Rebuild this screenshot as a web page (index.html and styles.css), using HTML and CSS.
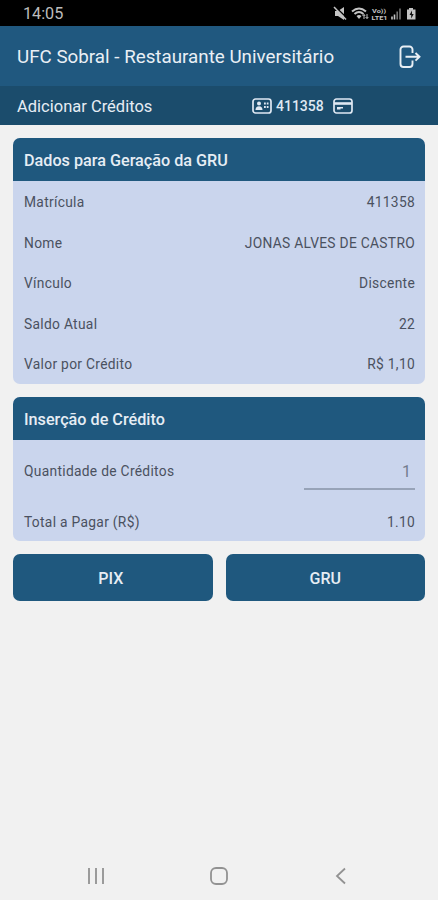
FILE: index.html
```html
<!DOCTYPE html>
<html lang="pt-BR">
<head>
  <meta charset="UTF-8">
  <meta name="viewport" content="width=device-width, initial-scale=1.0">
  <title>UFC Sobral - Restaurante Universitário</title>
  <link rel="stylesheet" href="styles.css">
</head>
<body>
  <div class="app">
    <div class="status-bar">
      <span class="clock">14:05</span>
      <svg class="status-icons" width="86" height="16" viewBox="0 0 86 16" fill="none" stroke="#c4c4c4">
        <!-- mudo -->
        <path d="M2 5h3l6-4v13l-6-4H2z" fill="#c4c4c4" stroke="none"/>
        <path d="M2.500 1l12 11.500" stroke="#000" stroke-width="1.500"/>
        <path d="M1 1l12 12.500" stroke-width="1.500"/>
        <!-- wifi -->
        <path d="M19 5.500q7-6 14 0M21.500 8q4.500-4 9 0" stroke-width="2"/>
        <path d="M23.500 10l2.500 3 2.500-3q-2.500-2-5 0z" fill="#c4c4c4" stroke="none"/>
        <path d="M31 13V8.500m-1.500 1.500L31 8.500l1.200 1.500M34 8v4.500m-1.500-1.500L34 12.500l1.300-1.500"/>
        <!-- VoLTE -->
        <text class="lte" x="39" y="6.500" textLength="14" lengthAdjust="spacingAndGlyphs">Vo))</text>
        <text class="lte" x="38.500" y="14" textLength="16" lengthAdjust="spacingAndGlyphs">LTE1</text>
        <!-- sinal -->
        <path d="M59 13.500v-3M61.500 13.500V8.500" stroke-width="1.600"/>
        <path d="M64.200 13.500V5.500M67 13.500V2.500" stroke="#747474" stroke-width="1.600"/>
        <!-- bateria -->
        <path d="M74 3.500h2V2h4v1.500h2.500v10H74z" fill="#c4c4c4" stroke="none"/>
        <path d="M79 4.500L76.500 9h1.700v3.500L80.700 8H79z" fill="#111" stroke="none"/>
      </svg>
    </div>

    <header class="header">
      <h1>UFC Sobral - Restaurante Universitário</h1>
      <svg class="logout" width="22" height="24" viewBox="0 0 22 24" fill="none" stroke="#e9eff5" stroke-width="1.900">
        <path d="M13.500 8V4.500a3 3 0 0 0-3-3h-6a3 3 0 0 0-3 3v14.500a3 3 0 0 0 3 3h6a3 3 0 0 0 3-3v-3.500"/>
        <path d="M6.500 11.800h13.500M16.500 8l4 3.800-4 3.800"/>
      </svg>
    </header>

    <div class="subheader">
      <h2>Adicionar Créditos</h2>
      <div class="user">
        <svg width="20" height="16" viewBox="0 0 20 16" fill="none" stroke="#dfe8f3" stroke-width="1.700">
          <rect x="1" y="1" width="18" height="14" rx="2.500"/>
          <circle cx="7" cy="5.500" r="2" fill="#dfe8f3" stroke="none"/>
          <path d="M3.500 12q0-3.800 3.500-3.800t3.500 3.800z" fill="#dfe8f3" stroke="none"/>
          <path d="M12 5.500h1.800m1 0h1.700M12 9h1.800m1 0h1.700" stroke-width="2.200"/>
        </svg>
        <span>411358</span>
        <svg width="20" height="16" viewBox="0 0 20 16" fill="none" stroke="#dfe8f3" stroke-width="1.700">
          <rect x="1" y="1" width="18" height="14" rx="2.500"/>
          <path d="M1 5.500h18" stroke-width="2.600"/>
          <path d="M4 10.800h3.500M4 9.800h6" stroke-width="1.500"/>
        </svg>
      </div>
    </div>

    <main class="content">
      <section class="card">
        <h3>Dados para Geração da GRU</h3>
        <dl>
          <div class="row"><dt>Matrícula</dt><dd>411358</dd></div>
          <div class="row"><dt>Nome</dt><dd>JONAS ALVES DE CASTRO</dd></div>
          <div class="row"><dt>Vínculo</dt><dd>Discente</dd></div>
          <div class="row"><dt>Saldo Atual</dt><dd>22</dd></div>
          <div class="row"><dt>Valor por Crédito</dt><dd>R$ 1,10</dd></div>
        </dl>
      </section>

      <section class="card">
        <h3>Inserção de Crédito</h3>
        <div class="row row-input">
          <label for="quantidade">Quantidade de Créditos</label>
          <input id="quantidade" type="text" value="1">
        </div>
        <div class="row"><span>Total a Pagar (R$)</span><span>1.10</span></div>
      </section>

      <div class="buttons">
        <button type="button">PIX</button>
        <button type="button">GRU</button>
      </div>
    </main>

    <nav class="nav-bar">
      <svg width="18" height="18" viewBox="0 0 18 18" fill="none" stroke="#929292" stroke-width="1.800">
        <path d="M2 1v16M9 1v16M16 1v16"/>
      </svg>
      <svg width="18" height="18" viewBox="0 0 18 18" fill="none" stroke="#929292" stroke-width="1.800">
        <rect x="1" y="1" width="16" height="16" rx="5"/>
      </svg>
      <svg width="18" height="18" viewBox="0 0 18 18" fill="none" stroke="#929292" stroke-width="1.800">
        <path d="M13 1.500L5 9l8 7.500"/>
      </svg>
    </nav>
  </div>
</body>
</html>
```
FILE: styles.css
```css
* {
  box-sizing: border-box;
}
body {
  margin: 0;
  background: #f1f1f1;
  font-family: Roboto, "Liberation Sans", sans-serif;
}
h1, h2, h3, dl, dd {
  margin: 0;
}
svg {
  display: block;
}
.app {
  display: flex;
  flex-direction: column;
  height: 900px;
}
.status-bar {
  display: flex;
  align-items: center;
  justify-content: space-between;
  height: 26px;
  padding: 1px 19px 0 23px;
  background: #000;
}
.clock {
  color: #bdbdbd;
  font-size: 16.2px;
}
.lte {
  fill: #c4c4c4;
  stroke: none;
  font-size: 6px;
  font-weight: bold;
}
.header {
  display: flex;
  align-items: center;
  justify-content: space-between;
  height: 60px;
  padding: 1px 17px 0 17px;
  background: #20587f;
}
.header h1 {
  color: #e9eff5;
  font-size: 18.8px;
  font-weight: 400;
  white-space: nowrap;
}
.subheader {
  display: flex;
  align-items: center;
  height: 39px;
  padding-left: 17px;
  background: #1b4c6c;
}
.subheader h2 {
  width: 235px;
  padding-top: 1px;
  color: #e6edf4;
  font-size: 16.5px;
  font-weight: 400;
}
.user {
  display: flex;
  align-items: center;
  color: #dfe8f3;
  font-size: 14px;
  font-weight: 500;
}
.user span {
  width: 61px;
  padding-left: 4px;
}
.content {
  display: flex;
  flex: 1;
  flex-direction: column;
  gap: 13px;
  padding: 13px;
}
.card {
  overflow: hidden;
  border-radius: 7px;
  background: #cad5ed;
}
.card h3 {
  height: 43px;
  padding: 0 11px;
  background: #1f587e;
  color: #e6edf4;
  font-size: 16.2px;
  font-weight: 500;
  line-height: 45px;
}
.row {
  display: flex;
  align-items: center;
  justify-content: space-between;
  height: 40.5px;
  padding: 2px 10px 0 11px;
  color: #4a5160;
  font-size: 13.8px;
  letter-spacing: 0.3px;
}
.row-input {
  height: 61px;
}
.row-input input {
  width: 111px;
  height: 38px;
  padding: 3px 4px 0 0;
  border: 0;
  border-bottom: 2px solid #97a3b8;
  background: none;
  color: #737c8d;
  font-family: inherit;
  font-size: 16px;
  text-align: right;
}
.buttons {
  display: grid;
  grid-template-columns: 1fr 1fr;
  gap: 13px;
}
.buttons button {
  height: 47px;
  padding: 2px 0 0;
  border: 0;
  border-radius: 7px;
  background: #1f587e;
  color: #e6edf4;
  font-family: inherit;
  font-size: 16px;
  font-weight: 500;
}
.buttons button:first-child {
  padding-right: 4px;
}
.nav-bar {
  display: flex;
  align-items: center;
  justify-content: space-between;
  height: 48px;
  padding: 0 88px 0 87px;
}
```
